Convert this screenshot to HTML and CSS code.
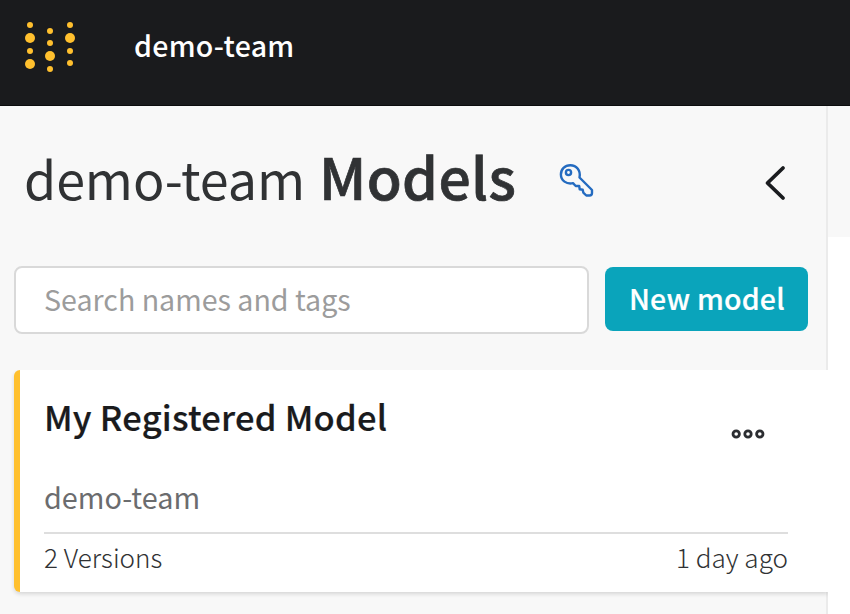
FILE: index.html
```html
<!DOCTYPE html>
<html lang="en">
<head>
<meta charset="utf-8">
<title>demo-team Models</title>
<link rel="stylesheet" href="styles.css">
</head>
<body>
<header class="topbar">
  <svg class="logo" width="52" height="52" viewBox="24 21 52 52" fill="#ffc02e">
    <circle cx="30" cy="25" r="3"/><circle cx="30" cy="38" r="5"/><circle cx="30" cy="51" r="3"/><circle cx="30" cy="64" r="5"/>
    <circle cx="50" cy="31" r="3"/><circle cx="50" cy="43" r="3"/><circle cx="50" cy="56" r="5"/><circle cx="50" cy="69" r="3"/>
    <circle cx="70" cy="25" r="3"/><circle cx="70" cy="38" r="5"/><circle cx="70" cy="51" r="3"/><circle cx="70" cy="63" r="3"/>
  </svg>
  <span class="team">demo-team</span>
</header>
<div class="content">
  <main class="sidebar">
    <div class="heading">
      <h1><span class="entity">demo-team</span><strong>Models</strong></h1>
      <svg class="key" width="36" height="36" viewBox="558 162 36 36" fill="none" stroke="#246bc0" stroke-width="2.4" stroke-linejoin="round">
        <path d="M579.500 177.500C581 170.500 576.500 165.200 570.300 165.200C564.800 165.200 560.900 169.200 560.900 174.500C560.900 180.500 566.500 184.600 573 183.200L575.700 186H579.200L579.700 189.200L582.700 189.700L583.300 192.600L586.300 195.500H589.500Q592 195.500 592 193V190Z"/>
        <circle cx="568.500" cy="172.500" r="2.600"/>
      </svg>
      <svg class="chevron" width="24" height="40" viewBox="763 163 24 40" fill="none" stroke="#1a1c1f" stroke-width="3.8" stroke-linecap="round" stroke-linejoin="round"><path d="M783 168L767.500 183L783 198"/></svg>
    </div>
    <div class="tools">
      <div class="search"><span>Search names and tags</span></div>
      <div class="button"><span>New model</span></div>
    </div>
    <section class="card">
      <div class="card-top">
        <h2>My Registered Model</h2>
        <svg class="dots" width="34" height="12" viewBox="731 428 34 12" fill="none" stroke="#2b2d31" stroke-width="2.800"><circle cx="736.200" cy="434" r="3.200"/><circle cx="748" cy="434" r="3.200"/><circle cx="759.800" cy="434" r="3.200"/></svg>
      </div>
      <div class="owner">demo-team</div>
      <div class="meta"><span class="versions">2 Versions</span><span class="age">1 day ago</span></div>
    </section>
  </main>
  <aside class="pane"><div class="pane-head"></div></aside>
</div>
</body>
</html>
```
FILE: styles.css
```css
* { box-sizing: border-box; }
body {
  margin: 0;
  width: 850px;
  height: 614px;
  overflow: hidden;
  background: #f8f8f8;
  color: #1a1b1d;
  font-family: "Noto Sans CJK SC", "Noto Sans", sans-serif;
  white-space: nowrap;
}
svg { display: block; flex: none; }
h1, h2 { margin: 0; }
.topbar {
  height: 106px;
  padding: 21px 24px 0;
  display: flex;
  background: #1a1b1d;
  border-bottom: 1px solid #0c0d0e;
}
.team {
  margin-left: 58px;
  color: #fff;
  font-size: 28.5px;
  font-weight: 500;
  letter-spacing: .3px;
  line-height: 47px;
}
.content { display: flex; height: 508px; }
.sidebar {
  width: 828px;
  padding-left: 14px;
  border-right: 2px solid #ebebeb;
}
.heading { display: flex; height: 160px; padding: 36px 39px 0 10px; }
h1 {
  width: 534px;
  color: #303234;
  font-weight: 400;
  line-height: 66px;
  display: flex;
  align-items: baseline;
}
.entity { font-size: 52px; letter-spacing: -.1px; }
h1 strong { font-size: 57px; font-weight: 500; letter-spacing: .4px; -webkit-text-stroke: .7px; margin-left: 14px; }
.key { margin-top: 20px; }
.chevron { margin: 21px 0 0 auto; }
.tools { display: flex; gap: 16px; height: 104px; }
.search {
  width: 575px;
  height: 68px;
  padding-left: 28px;
  border: 2px solid #d9d9d9;
  border-radius: 8px;
  background: #fff;
  color: #9c9c9c;
  font-size: 28.6px;
  line-height: 62px;
}
.button {
  width: 203px;
  height: 64px;
  margin-top: 1px;
  padding-left: 24px;
  border-radius: 8px;
  background: #0aa4bb;
  color: #fff;
  font-size: 28.5px;
  font-weight: 500;
  letter-spacing: .2px;
  -webkit-text-stroke: .2px;
  line-height: 62px;
}
.card {
  width: 814px;
  height: 222px;
  padding: 23px 40px 0 24px;
  position: relative;
  border-left: 6px solid #ffc02e;
  border-radius: 6px 0 0 6px;
  background: #fff;
  box-shadow: 0 2px 4px rgba(0, 0, 0, .14);
  clip-path: inset(0 0 -8px -8px);
}
.card-top { display: flex; justify-content: space-between; height: 80px; padding-right: 23px; }
h2 { font-size: 34.5px; font-weight: 500; letter-spacing: .22px; -webkit-text-stroke: .2px; line-height: 46px; }
.dots { margin-top: 35px; }
.owner { height: 61px; border-bottom: 2px solid #dedede; color: #6b6c6e; font-size: 28.8px; line-height: 47px; }
.meta { display: flex; justify-content: space-between; color: #303234; font-size: 26.1px; font-weight: 300; line-height: 46px; }
.pane { flex: 1; background: #fff; }
.pane-head { height: 131px; background: #f8f8f8; }
```
